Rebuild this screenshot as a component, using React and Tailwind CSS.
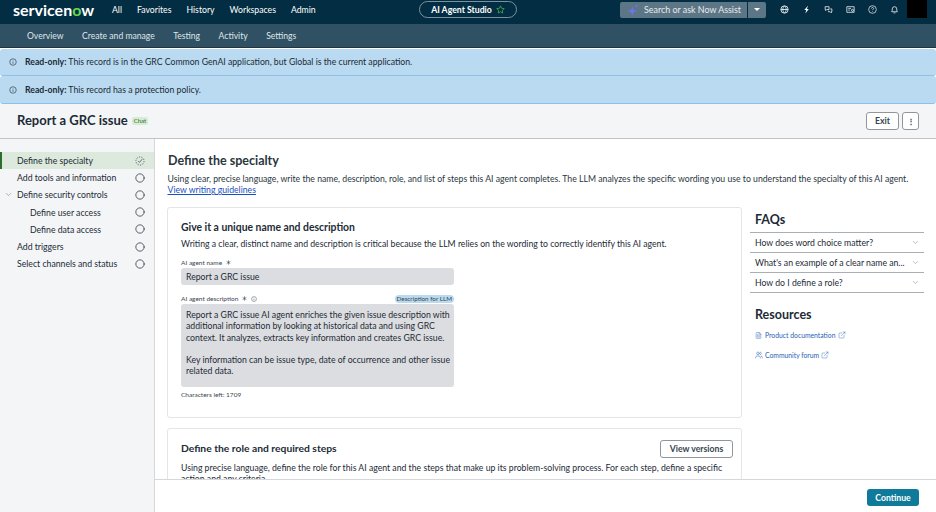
import { Asterisk, ChevronDown, Circle, ExternalLink, FileText, Users } from "lucide-react";

const steps = [
  { label: "Define the specialty", active: true },
  { label: "Add tools and information" },
  { label: "Define security controls", open: true },
  { label: "Define user access", sub: true },
  { label: "Define data access", sub: true },
  { label: "Add triggers" },
  { label: "Select channels and status" },
];

const faqs = ["How does word choice matter?", "What's an example of a clear name an...", "How do I define a role?"];

function InfoIcon({ className }) {
  return (
    <svg viewBox="0 0 16 16" fill="none" stroke="currentColor" strokeWidth="1.2" className={className}>
      <circle cx="8" cy="8" r="6.5" />
      <path d="M8 7v4.5M8 4.5v1" />
    </svg>
  );
}

function Banner({ children, tall }) {
  return (
    <div className={`flex items-center gap-[8px] rounded-[3px] border-b border-[#8fc1e8] bg-[#b9daf0] pl-[9px] text-[8.7px] text-[#1c2b36] ${tall ? "h-[28px]" : "h-[27px]"}`}>
      <InfoIcon className="h-[8px] w-[8px]" />
      <p>
        <b className="font-bold">Read-only:</b> {children}
      </p>
    </div>
  );
}

function TopIcons() {
  return (
    <div className="ml-[14px] flex items-center gap-[13px] text-white">
      <svg viewBox="0 0 16 16" fill="none" stroke="currentColor" strokeWidth="1.4" className="h-[9px] w-[9px]">
        <circle cx="8" cy="8" r="6.5" />
        <path d="M1.5 8h13M8 1.5c-4 4-4 9 0 13M8 1.5c4 4 4 9 0 13" />
      </svg>
      <svg viewBox="0 0 16 16" fill="currentColor" className="h-[9px] w-[9px]">
        <path d="M11 1 4 9h3.5L6 15l6-8H8.5z" />
      </svg>
      <svg viewBox="0 0 16 16" fill="none" stroke="currentColor" strokeWidth="1.3" className="h-[9px] w-[9px]">
        <path d="M2 3h7v5H5L3 10V8H2zM11 7h3v5h-1v2l-2-2H8v-2" />
      </svg>
      <svg viewBox="0 0 16 16" fill="none" stroke="currentColor" strokeWidth="1.3" className="h-[9px] w-[9px]">
        <path d="M1.5 3h13v10h-13zM4 6h5M4 9h3" />
        <circle cx="11.5" cy="9.5" r="1.8" />
      </svg>
      <svg viewBox="0 0 16 16" fill="none" stroke="currentColor" strokeWidth="1.2" className="h-[9px] w-[9px]">
        <circle cx="8" cy="8" r="6.8" />
        <path d="M6.2 6.2c0-2.4 3.7-2.4 3.7 0 0 1.5-1.9 1.5-1.9 3M8 10.8v1" />
      </svg>
      <svg viewBox="0 0 16 16" fill="none" stroke="currentColor" strokeWidth="1.3" className="h-[9px] w-[9px]">
        <path d="M3 12c1-1 1-3 1-5a4 4 0 0 1 8 0c0 2 0 4 1 5zM6.5 14h3" />
      </svg>
    </div>
  );
}

export default function App() {
  return (
    <div className="flex h-[512px] w-[936px] flex-col overflow-hidden bg-white font-['Lato',sans-serif] text-[#1c2b36]">
      <header className="flex h-[24px] shrink-0 items-center bg-[#032d42] pb-[5px] text-[8.7px] text-white">
        <span className="ml-[13px] w-[99px] text-[16px] font-bold leading-none">
          servicen<span className="text-[#62d84e]">o</span>w
        </span>
        <nav className="flex w-[307px] gap-[15px]">
          <a>All</a>
          <a>Favorites</a>
          <a>History</a>
          <a>Workspaces</a>
          <a>Admin</a>
        </nav>
        <div className="flex h-[17px] w-[98px] items-center justify-center gap-[4px] rounded-full border border-[#7c929e] font-bold">
          AI Agent Studio
          <svg viewBox="0 0 16 16" fill="none" stroke="#4caf50" strokeWidth="1.4" className="h-[9px] w-[9px]">
            <path d="m8 1.5 2 4.3 4.7.6-3.5 3.2.9 4.7L8 12l-4.1 2.3.9-4.7L1.3 6.4 6 5.8z" />
          </svg>
        </div>
        <div className="ml-[103px] flex h-[16px] w-[146px] items-center overflow-hidden rounded-[2px] bg-[#5d7686]">
          <div className="flex h-full flex-1 items-center gap-[5px] pl-[7px]">
            <svg viewBox="0 0 16 16" className="h-[12px] w-[12px]" fill="#6b74ee">
              <path d="M7 3 8.5 8l5 1.500-5 1.500L7 16l-1.500-5L.5 9.500l5-1.500z" />
              <path d="m13 0 .7 2 2 .7-2 .7-.7 2-.7-2-2-.7 2-.7z" />
            </svg>
            <span className="text-[8.9px] text-[#e6ecef]">Search or ask Now Assist</span>
          </div>
          <div className="flex h-full w-[19px] items-center justify-center border-l border-[#032d42]">
            <span className="h-0 w-0 border-x-[3.5px] border-t-[3.5px] border-x-transparent border-t-white" />
          </div>
        </div>
        <TopIcons />
        <div className="ml-[8px] h-[18px] w-[20px] self-start bg-black" />
      </header>

      <nav className="flex h-[24px] shrink-0 items-center gap-[18.5px] border-b border-[#26333b] bg-[#2f5163] pl-[27px] pt-[1px] text-[8.6px] text-[#dfe6ea]">
        <a>Overview</a>
        <a>Create and manage</a>
        <a>Testing</a>
        <a>Activity</a>
        <a>Settings</a>
      </nav>

      <div className="shrink-0 pt-[1px]">
        <Banner>This record is in the GRC Common GenAI application, but Global is the current application.</Banner>
        <Banner tall>This record has a protection policy.</Banner>
      </div>

      <div className="flex h-[35px] shrink-0 items-center border-b border-[#c0c4c7] bg-[#f4f5f7] pl-[17px] pr-[17px]">
        <h1 className="text-[13px] font-bold text-[#1c2b36]">Report a GRC issue</h1>
        <span className="ml-[4px] rounded-[2px] bg-[#d6edd4] px-[2px] text-[6px] leading-[8px] text-[#2f6b30]">Chat</span>
        <button className="ml-auto h-[18px] w-[33px] rounded-[3px] border border-[#8f979c] bg-white text-[8.7px] font-bold text-[#38464f]">Exit</button>
        <button className="ml-[3px] flex h-[18px] w-[17px] items-center justify-center rounded-[3px] border border-[#8f979c] bg-white text-[8px] font-bold text-[#38464f]">⋮</button>
      </div>

      <div className="flex min-h-0 flex-1">
        <aside className="w-[155px] shrink-0 border-r border-[#d5d8da] bg-[#f4f5f7] pt-[13px] text-[8.7px]">
          {steps.map((s) => (
            <div key={s.label} className={`relative flex h-[17.2px] items-center pr-[9px] ${s.active ? "border-l-2 border-[#2c6e2f] bg-[#dde9dd] pl-[15px]" : s.sub ? "pl-[30px]" : "pl-[17px]"}`}>
              {s.open && <ChevronDown className="absolute left-[4px] h-[9px] w-[9px] text-[#5a666e]" strokeWidth={1.2} />}
              <span className="flex-1">{s.label}</span>
              {s.active ? (
                <svg viewBox="0 0 16 16" fill="none" stroke="#38464f" strokeWidth="1.2" className="h-[10px] w-[10px]">
                  <circle cx="8" cy="8" r="6.5" strokeDasharray="2 2" />
                  <path d="m5 8 2.2 2.2L11.5 5" />
                </svg>
              ) : (
                <Circle className="h-[10px] w-[10px] text-[#38464f]" strokeWidth={2} />
              )}
            </div>
          ))}
        </aside>

        <div className="flex min-w-0 flex-1 flex-col">
          <main className="min-h-0 flex-1 overflow-hidden pl-[12px] pt-[14px]">
            <h2 className="pl-[1px] text-[12.5px] font-bold leading-[16px] text-[#2a3640]">Define the specialty</h2>
            <p className="mt-[4px] w-[750px] pl-[0.5px] text-[8.7px] leading-[11px] text-[#2a3640]">
              Using clear, precise language, write the name, description, role, and list of steps this AI agent completes. The LLM analyzes the specific wording you use to understand the specialty of this AI agent.
              <br />
              <a className="text-[#1a4fc0] underline">View writing guidelines</a>
            </p>

            <div className="mt-[12px] flex gap-[8px]">
              <div className="w-[575px] shrink-0">
                <section className="h-[211px] rounded-[3px] border border-[#e3e5e7] pl-[13px] pt-[12px]">
                  <h3 className="text-[10.4px] font-bold leading-[14px]">Give it a unique name and description</h3>
                  <p className="mt-[4px] text-[8.7px] leading-[12px]">Writing a clear, distinct name and description is critical because the LLM relies on the wording to correctly identify this AI agent.</p>
                  <label className="mt-[8px] flex items-center gap-[3px] text-[6.5px] leading-[9px] text-[#38464f]">
                    AI agent name <Asterisk className="h-[7px] w-[7px]" strokeWidth={2} />
                  </label>
                  <div className="mt-[1px] flex h-[17px] w-[273px] items-center rounded-[3px] bg-[#dcdde0] pl-[5px] text-[8.7px]">Report a GRC issue</div>
                  <div className="mt-[8px] flex h-[11px] w-[273px] items-center justify-between text-[6.5px] text-[#38464f]">
                    <span className="flex items-center gap-[3px]">
                      AI agent description <Asterisk className="h-[7px] w-[7px]" strokeWidth={2} />
                      <InfoIcon className="h-[6px] w-[6px]" />
                    </span>
                    <span className="rounded-full bg-[#b9daf0] px-[2px] text-[6.3px] leading-[8px]">Description for LLM</span>
                  </div>
                  <div className="h-[83px] w-[273px] whitespace-pre-line rounded-[3px] bg-[#dcdde0] pl-[5px] pt-[5px] text-[8.7px] leading-[11.3px]">
                    {"Report a GRC issue AI agent enriches the given issue description with\nadditional information by looking at historical data and using GRC\ncontext. It analyzes, extracts key information and creates GRC issue.\n\nKey information can be issue type, date of occurrence and other issue\nrelated data."}
                  </div>
                  <p className="mt-[3px] text-[6.5px] leading-[9px] text-[#38464f]">Characters left: 1709</p>
                </section>

                <section className="mt-[10px] h-[80px] rounded-[3px] border border-[#e3e5e7] pl-[13px] pr-[8px] pt-[11px]">
                  <div className="flex items-center justify-between">
                    <h3 className="text-[10.3px] font-bold">Define the role and required steps</h3>
                    <button className="h-[18px] w-[73px] rounded-[3px] border border-[#8f979c] text-[8.7px] font-bold text-[#38464f]">View versions</button>
                  </div>
                  <p className="mt-[4px] text-[8.7px] leading-[11px]">Using precise language, define the role for this AI agent and the steps that make up its problem-solving process. For each step, define a specific action and any criteria</p>
                </section>
              </div>

              <aside className="w-[174px] shrink-0 pt-[3px]">
                <h3 className="pl-[5px] text-[12.5px] font-bold leading-[20px]">FAQs</h3>
                <div className="mt-[2px] border-t border-[#a9b0b5]">
                  {faqs.map((q) => (
                    <div key={q} className="flex h-[20px] items-center justify-between border-b border-[#a9b0b5] pl-[5px] pr-[4px] text-[8.7px]">
                      {q}
                      <ChevronDown className="h-[9px] w-[9px] text-[#6b767d]" strokeWidth={1.2} />
                    </div>
                  ))}
                </div>
                <h3 className="mt-[14px] pl-[5px] text-[12.5px] font-bold leading-[16px]">Resources</h3>
                <a className="mt-[7px] flex items-center gap-[3px] pl-[5px] text-[6.8px] text-[#2a62b5]">
                  <FileText className="h-[7px] w-[7px]" strokeWidth={1.5} /> Product documentation <ExternalLink className="h-[8px] w-[8px]" strokeWidth={1.3} />
                </a>
                <a className="mt-[10px] flex items-center gap-[2px] pl-[5px] text-[6.8px] text-[#2a62b5]">
                  <Users className="h-[8px] w-[8px]" strokeWidth={1.5} /> Community forum <ExternalLink className="h-[8px] w-[8px]" strokeWidth={1.3} />
                </a>
              </aside>
            </div>
          </main>

          <footer className="flex h-[33px] shrink-0 items-start justify-end border-t border-[#d5d8da] bg-white pr-[17px] pt-[9px]">
            <button className="h-[17px] w-[52px] rounded-[3px] bg-[#0f7a99] text-[8.7px] font-bold text-white">Continue</button>
          </footer>
        </div>
      </div>
    </div>
  );
}
